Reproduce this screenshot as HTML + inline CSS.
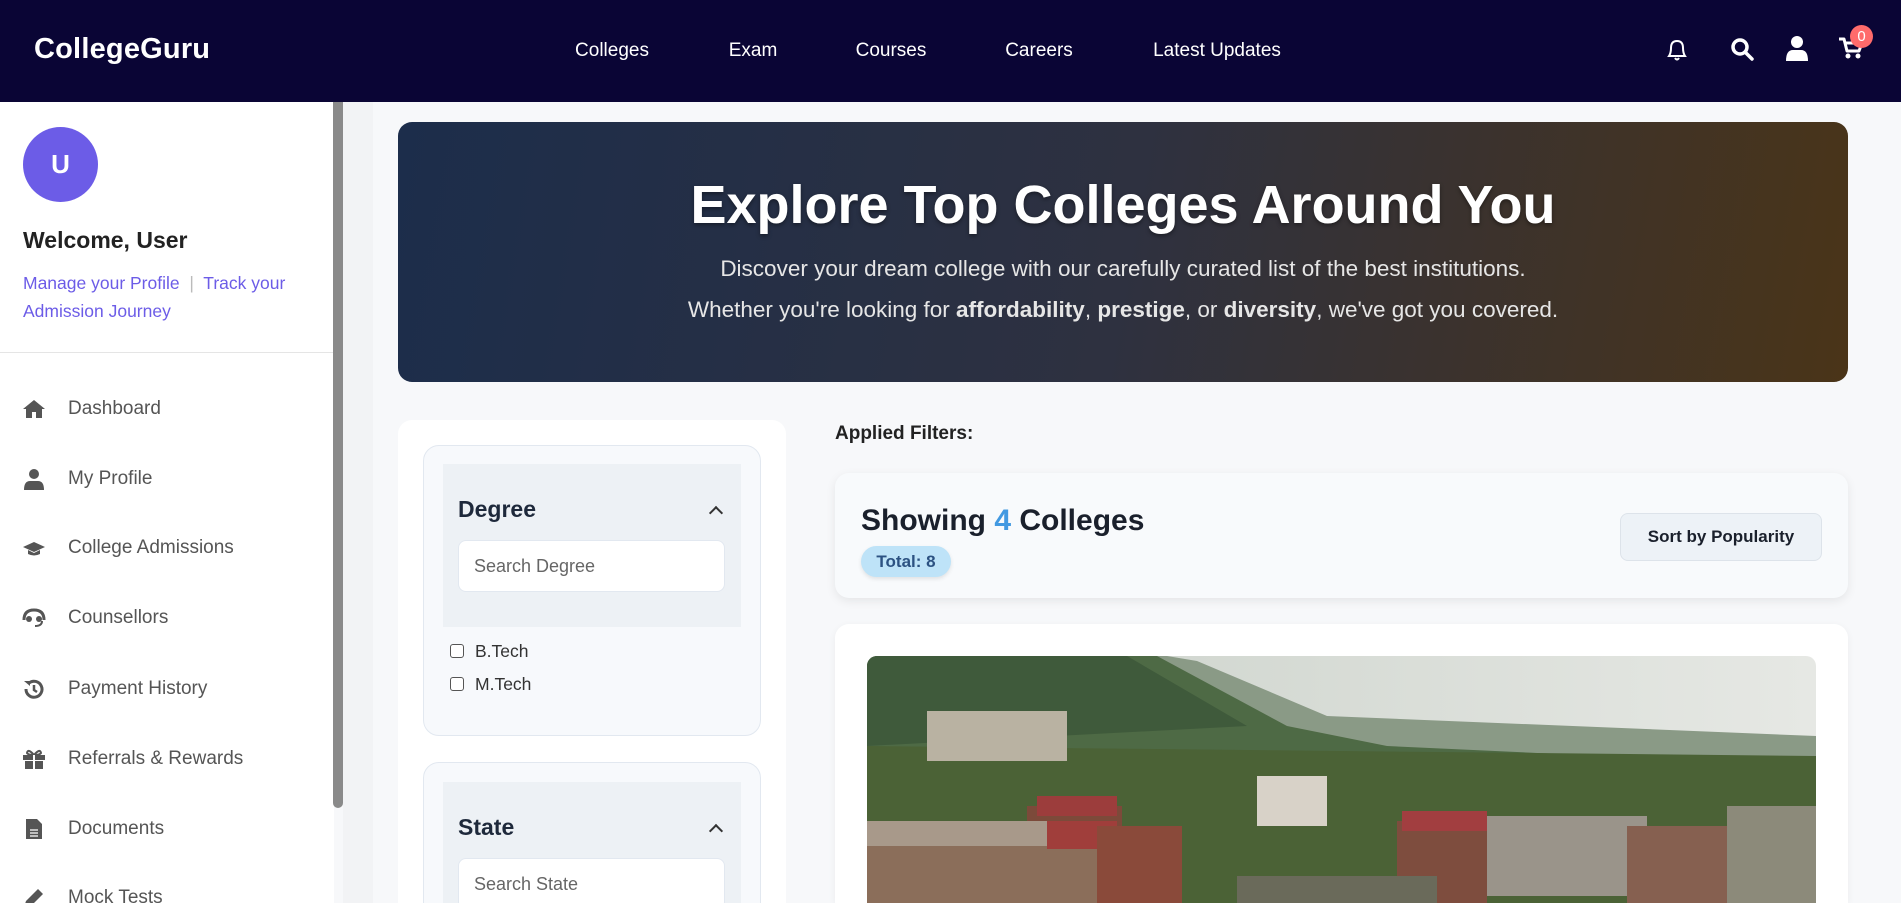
<!DOCTYPE html>
<html style="width:1901px;height:903px;overflow:hidden"><head><meta charset="utf-8"><style>
*{box-sizing:border-box;margin:0;padding:0}
body{width:1901px;height:903px;overflow:hidden;background:#f7f8fa;font-family:"Liberation Sans",Arial,sans-serif;position:relative}
.nav{position:absolute;left:0;top:0;width:1901px;height:102px;background:#0a0535;color:#fff}
.logo{position:absolute;left:34px;top:33px;font-size:29px;font-weight:bold;letter-spacing:0.2px}
.nl{position:absolute;top:40px;font-size:19px;transform:translateX(-50%)}
.side{position:absolute;left:0;top:102px;width:334px;height:801px;background:#fff}
.scroll{position:absolute;left:333px;top:102px;width:10px;height:706px;background:#8a8a8a;border-radius:0 0 5px 5px}
.gut{position:absolute;left:343px;top:102px;width:30px;height:801px;background:#f2f3f5}
.av{position:absolute;left:23px;width:75px;height:75px;border-radius:50%;background:#6c5ce7;color:#fff;font-weight:bold;font-size:26px;text-align:center;line-height:75px}
.wel{position:absolute;left:23px;font-size:23px;font-weight:bold;color:#222}
.lk{position:absolute;left:23px;font-size:17.5px;color:#6c5ce7;line-height:28px;width:290px}
.div{position:absolute;left:0;width:334px;height:1px;background:#e5e5e5}
.mi{position:absolute;left:68px;font-size:19px;color:#555;transform:translateY(-50%)}
.ic{position:absolute;left:22px;width:24px;height:22px;transform:translateY(-50%)}
.hero{position:absolute;left:398px;top:122px;width:1450px;height:260px;border-radius:14px;background:linear-gradient(100deg,#1c2d4b 0%,#2e3140 50%,#4a3418 100%);color:#fff;text-align:center}
.hero h1{position:absolute;top:52px;width:100%;font-size:54px;font-weight:bold;text-shadow:0 2px 4px rgba(0,0,0,.4)}
.hero p{position:absolute;width:100%;font-size:22.5px;color:#e6e6e6}
.fp{position:absolute;left:398px;top:420px;width:388px;height:500px;background:#fff;border-radius:14px}
.fb{position:absolute;left:423px;width:338px;background:#f7f9fc;border:1px solid #e2e8f0;border-radius:16px}
.fh{position:absolute;left:443px;width:298px;background:#edf1f5}
.fh b{position:absolute;left:15px;font-size:23px;color:#1e293b}
.inp{position:absolute;left:15px;width:267px;height:52px;background:#fff;border-radius:8px;border:1px solid #e2e8f0;font-size:18px;color:#666;padding:15px 15px}
.chev{position:absolute;left:268px;width:10px;height:10px;border-left:2px solid #333;border-top:2px solid #333;transform:rotate(45deg)}
.cb{position:absolute;left:450px;width:14px;height:14px;border:1.5px solid #555;border-radius:3px;background:#fff}
.cl{position:absolute;left:475px;font-size:17.5px;color:#333}
.af{position:absolute;left:835px;top:423px;font-size:19px;font-weight:bold;color:#222}
.sc{position:absolute;left:835px;top:473px;width:1013px;height:125px;background:#f8fafc;border-radius:14px;box-shadow:0 3px 10px rgba(0,0,0,.08)}
.sc h2{position:absolute;left:26px;top:31px;font-size:30px;color:#1a202c}
.pill{position:absolute;left:26px;top:73px;width:90px;height:31px;border-radius:16px;background:#bee3f8;color:#2c5282;font-weight:bold;font-size:17px;text-align:center;line-height:31px;box-shadow:0 2px 4px rgba(0,0,0,.1)}
.sort{position:absolute;left:785px;top:40px;width:202px;height:48px;background:#edf2f7;border:1px solid #dde3ea;border-radius:8px;font-weight:bold;font-size:17px;color:#1a202c;text-align:center;line-height:46px}
.cc{position:absolute;left:835px;top:624px;width:1013px;height:300px;background:#fff;border-radius:14px;box-shadow:0 2px 8px rgba(0,0,0,.05)}
.img{position:absolute;left:867px;top:656px;width:949px;height:260px;border-radius:10px 10px 0 0;overflow:hidden}
</style></head><body>
<div class="nav">
<div class="logo">CollegeGuru</div>
<div class="nl" style="left:612px">Colleges</div>
<div class="nl" style="left:753px">Exam</div>
<div class="nl" style="left:891px">Courses</div>
<div class="nl" style="left:1039px">Careers</div>
<div class="nl" style="left:1217px">Latest Updates</div>
<svg style="position:absolute;left:1665px;top:37px" width="24" height="26" viewBox="0 0 24 26"><path d="M4 19 Q6 16 6 11 Q6 4 12 4 Q18 4 18 11 Q18 16 20 19 Z" fill="none" stroke="#fff" stroke-width="2"/><path d="M10 21 Q12 24 14 21" fill="none" stroke="#fff" stroke-width="2"/></svg>
<svg style="position:absolute;left:1730px;top:37px" width="24" height="24" viewBox="0 0 24 24"><circle cx="10" cy="10" r="7" fill="none" stroke="#fff" stroke-width="3.5"/><path d="M15 15 L22 22" stroke="#fff" stroke-width="3.5" stroke-linecap="round"/></svg>
<svg style="position:absolute;left:1786px;top:35px" width="22" height="26" viewBox="0 0 22 26"><circle cx="11" cy="7" r="6" fill="#fff"/><path d="M0 26 Q0 15 7 15 L15 15 Q22 15 22 26 Z" fill="#fff"/></svg>
<svg style="position:absolute;left:1838px;top:36px" width="26" height="24" viewBox="0 0 26 24"><path d="M1 3 L6 3 L9 15 L21 15 L24 7 L7 7" fill="none" stroke="#fff" stroke-width="3" stroke-linejoin="round"/><circle cx="10" cy="20" r="2.5" fill="#fff"/><circle cx="20" cy="20" r="2.5" fill="#fff"/></svg>
<div style="position:absolute;left:1850px;top:25px;width:23px;height:23px;border-radius:50%;background:#ff6b6b;color:#fff;font-size:15px;text-align:center;line-height:23px">0</div>
</div>
<div class="side">
<div class="av" style="top:25px">U</div>
<div class="wel" style="top:125px">Welcome, User</div>
<div class="lk" style="top:167px">Manage your Profile <span style="color:#bbb">&nbsp;|&nbsp;</span> Track your Admission Journey</div>
<div class="div" style="top:250px"></div>
</div>
<div style="position:absolute;left:0;top:102px;width:334px;height:801px;overflow:hidden">
<svg class="ic" style="top:307px" viewBox="0 0 24 22"><path d="M12 2 L1 11 L4 11 L4 20 L10 20 L10 14 L14 14 L14 20 L20 20 L20 11 L23 11 Z" fill="#555"/></svg>
<div class="mi" style="top:307px">Dashboard</div>
<svg class="ic" style="top:377px" viewBox="0 0 24 22"><circle cx="12" cy="6" r="5" fill="#555"/><path d="M2 22 Q2 13 8 13 L16 13 Q22 13 22 22 Z" fill="#555"/></svg>
<div class="mi" style="top:377px">My Profile</div>
<svg class="ic" style="top:446px" viewBox="0 0 24 22"><path d="M12 5 L1 10 L12 15 L23 10 Z M6 13 L6 17 Q12 20 18 17 L18 13 L12 16 Z" fill="#555"/></svg>
<div class="mi" style="top:446px">College Admissions</div>
<svg class="ic" style="top:516px" viewBox="0 0 24 22"><path d="M2 13 Q2 3 12 3 Q22 3 22 13" fill="none" stroke="#555" stroke-width="3"/><circle cx="7" cy="12" r="3" fill="#555"/><circle cx="17" cy="12" r="3" fill="#555"/><path d="M20 14 Q20 19 13 19" fill="none" stroke="#555" stroke-width="2"/></svg>
<div class="mi" style="top:516px">Counsellors</div>
<svg class="ic" style="top:587px" viewBox="0 0 24 22"><path d="M4 11 A8 8 0 1 0 7 5" fill="none" stroke="#555" stroke-width="3"/><path d="M2 3 L8 3 L8 8 Z" fill="#555"/><path d="M12 7 L12 12 L15 14" fill="none" stroke="#555" stroke-width="2.5"/></svg>
<div class="mi" style="top:587px">Payment History</div>
<svg class="ic" style="top:657px" viewBox="0 0 24 22"><rect x="1" y="7" width="22" height="5" fill="#555"/><rect x="3" y="13" width="18" height="8" fill="#555"/><path d="M12 7 Q6 0 5 5 Q6 7 12 7 Q18 7 19 5 Q18 0 12 7" fill="none" stroke="#555" stroke-width="2"/><rect x="11" y="7" width="2" height="14" fill="#fff"/></svg>
<div class="mi" style="top:657px">Referrals &amp; Rewards</div>
<svg class="ic" style="top:727px" viewBox="0 0 24 22"><path d="M4 1 L15 1 L20 6 L20 21 L4 21 Z" fill="#555"/><path d="M8 12 L16 12 M8 15 L16 15 M8 18 L16 18" stroke="#fff" stroke-width="1.3"/></svg>
<div class="mi" style="top:727px">Documents</div>
<svg class="ic" style="top:796px" viewBox="0 0 24 22"><path d="M2 20 L4 14 L16 2 L21 7 L9 19 Z" fill="#555"/></svg>
<div class="mi" style="top:796px">Mock Tests</div>
</div>
<div class="scroll"></div>
<div class="gut"></div>
<div class="hero">
<h1>Explore Top Colleges Around You</h1>
<p style="top:134px">Discover your dream college with our carefully curated list of the best institutions.</p>
<p style="top:175px">Whether you're looking for <b>affordability</b>, <b>prestige</b>, or <b>diversity</b>, we've got you covered.</p>
</div>
<div class="fp" style="height:483px;border-radius:14px 14px 0 0"></div>
<div class="fb" style="top:445px;height:291px"></div>
<div class="fh" style="top:464px;height:163px"><b style="top:32px">Degree</b><div class="chev" style="top:44px"></div><div class="inp" style="top:76px">Search Degree</div></div>
<div class="cb" style="top:644px"></div><div class="cl" style="top:641px">B.Tech</div>
<div class="cb" style="top:677px"></div><div class="cl" style="top:674px">M.Tech</div>
<div class="fb" style="top:762px;height:160px;border-radius:16px 16px 0 0"></div>
<div class="fh" style="top:782px;height:121px"><b style="top:32px">State</b><div class="chev" style="top:44px"></div><div class="inp" style="top:76px">Search State</div></div>
<div class="af">Applied Filters:</div>
<div class="sc"><h2>Showing <span style="color:#4299e1">4</span> Colleges</h2><div class="pill">Total: 8</div><div class="sort">Sort by Popularity</div></div>
<div class="cc" style="height:279px;border-radius:14px 14px 0 0"></div>
<div class="img" style="height:247px"><svg width="949" height="260" viewBox="0 0 949 260" preserveAspectRatio="none">
<defs><linearGradient id="sky" x1="0" y1="0" x2="1" y2="0"><stop offset="0" stop-color="#c9d0c8"/><stop offset="1" stop-color="#e6e8e4"/></linearGradient></defs>
<rect width="949" height="260" fill="url(#sky)"/>
<path d="M0 0 L300 0 L330 5 L460 60 L949 80 L949 260 L0 260 Z" fill="#8a9a86"/>
<path d="M0 0 L290 0 L420 70 L520 90 L949 110 L949 260 L0 260 Z" fill="#4e6a45"/>
<path d="M0 0 L260 0 L380 70 L0 90 Z" fill="#3f5a3b"/>
<path d="M0 90 L949 100 L949 260 L0 260 Z" fill="#4b6236"/>
<rect x="60" y="55" width="140" height="50" fill="#b9b2a2"/>
<rect x="160" y="150" width="95" height="110" fill="#7c4a3a"/>
<rect x="170" y="140" width="80" height="20" fill="#9c3d3c"/>
<rect x="0" y="165" width="240" height="95" fill="#a8998a"/>
<rect x="0" y="190" width="240" height="70" fill="#8b6e5a"/>
<rect x="180" y="165" width="70" height="28" fill="#a03e3b"/>
<rect x="230" y="170" width="85" height="90" fill="#8a4a3a"/>
<rect x="390" y="120" width="70" height="50" fill="#d8d2c8"/>
<rect x="530" y="165" width="90" height="90" fill="#7e4d3e"/>
<rect x="535" y="155" width="85" height="20" fill="#a23e40"/>
<rect x="620" y="160" width="160" height="80" fill="#9a948a"/>
<rect x="760" y="170" width="110" height="80" fill="#866050"/>
<rect x="370" y="220" width="200" height="40" fill="#6a6a5a"/>
<rect x="860" y="150" width="89" height="110" fill="#8c8a7a"/>
</svg></div>
</body></html>
